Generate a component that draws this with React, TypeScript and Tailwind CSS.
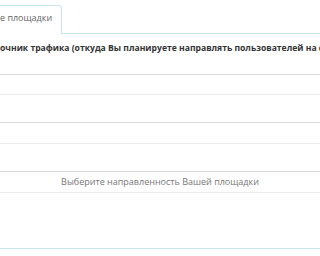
export default function App() {
  return (
    <div className="w-[320px] h-[256px] overflow-hidden bg-white font-['Open_Sans',sans-serif]">
      <div className="flex h-[34px] pt-[5px]">
        <div className="w-[62px] shrink-0 border-t border-r border-[#c8e3ec] rounded-tr-[4px] pt-[6px] text-[9px] leading-[12px] text-[#666] whitespace-nowrap">
          е площадки
        </div>
        <div className="flex-1 border-b border-[#c8e3ec]" />
      </div>
      <div className="mt-[8px] h-[12px] whitespace-nowrap overflow-hidden text-[8.6px] leading-[12px] font-bold text-[#333]">
        очник трафика (откуда Вы планируете направлять пользователей на сайт)
      </div>
      <div className="mt-[20px] h-[21px] border-t border-b border-t-[#d9d9d9] border-b-[#ebebeb]" />
      <div className="mt-[27px] h-[22px] border-t border-b border-t-[#d9d9d9] border-b-[#ebebeb]" />
      <div className="mt-[27px] h-[22px] border-t border-b border-t-[#d9d9d9] border-b-[#ebebeb] flex items-center justify-center text-[9px] text-[#777]">
        Выберите направленность Вашей площадки
      </div>
      <div className="mt-[55px] border-t border-[#c8e3ec]" />
    </div>
  );
}
